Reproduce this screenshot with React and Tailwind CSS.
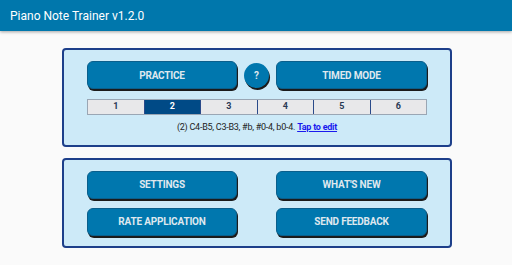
import React, { useState } from "react";

const font = { fontFamily: "Roboto, 'Liberation Sans', sans-serif" };

function BlueButton({ label, className = "" }) {
  return (
    <button
      className={`h-[28px] rounded-[6px] bg-[#0077ae] border border-[#0a5f8c] shadow-[1px_2px_0_#1b1b1b] text-[10px] font-bold text-[#dfe8ee] tracking-[-0.2px] ${className}`}
    >
      {label}
    </button>
  );
}

export default function App() {
  const [level, setLevel] = useState(2);

  return (
    <div className="w-[512px] h-[265px] bg-[#fafafa] overflow-hidden" style={font}>
      <div className="h-[31px] bg-[#0077ac] flex items-center pl-[10px] shadow-[0_1px_3px_rgba(0,0,0,0.35)] relative z-10">
        <span className="text-white text-[12px] mt-[1px]">Piano Note Trainer v1.2.0</span>
      </div>

      <div className="flex flex-col ml-[62px] w-[390px] pt-[17px] gap-[11px]">
        <div className="bg-[#cdeaf8] border-2 border-[#1d3f8a] rounded-[4px] px-[23px] pt-[11px] pb-[10px]">
          <div className="flex items-center gap-[7px]">
            <BlueButton label="PRACTICE" className="w-[150px]" />
            <button className="w-[25px] h-[25px] rounded-full bg-[#0077ae] shadow-[1px_2px_0_#1b1b1b] text-[10px] font-bold text-[#dfe8ee]">
              ?
            </button>
            <BlueButton label="TIMED MODE" className="w-[151px]" />
          </div>

          <div className="flex mt-[10px] h-[16px] border border-[#9aa6b4]">
            {[1, 2, 3, 4, 5, 6].map((n) => (
              <button
                key={n}
                onClick={() => setLevel(n)}
                className={`flex-1 flex items-center justify-center text-[9px] font-bold border-l border-[#2a4a8a] first:border-l-0 ${
                  level === n ? "bg-[#004a86] text-white" : "bg-[#e8e8ea] text-[#2a3a55]"
                }`}
              >
                {n}
              </button>
            ))}
          </div>

          <p className="mt-[6px] text-center text-[9px] text-[#222] tracking-[-0.25px]">
            (2) C4-B5, C3-B3, #b, #0-4, b0-4.{" "}
            <span className="text-[#1a1aee] font-bold underline">Tap to edit</span>
          </p>
        </div>

        <div className="bg-[#cdeaf8] border-2 border-[#1d3f8a] rounded-[4px] px-[23px] pt-[11px] pb-[10px]">
          <div className="grid grid-cols-[150px_151px] justify-between gap-y-[9px]">
            <BlueButton label="SETTINGS" />
            <BlueButton label="WHAT'S NEW" />
            <BlueButton label="RATE APPLICATION" />
            <BlueButton label="SEND FEEDBACK" />
          </div>
        </div>
      </div>
    </div>
  );
}
